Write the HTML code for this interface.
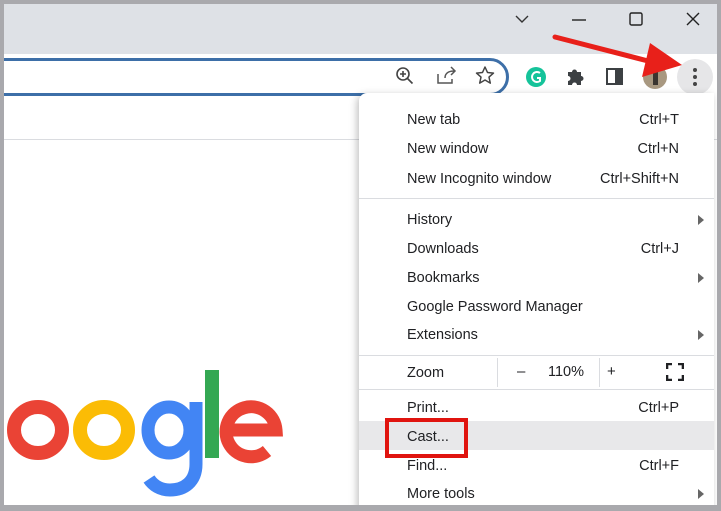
<!DOCTYPE html>
<html><head><meta charset="utf-8"><style>
*{margin:0;padding:0;box-sizing:border-box}
body{width:721px;height:511px;overflow:hidden;background:#a9a9ad;position:relative;font-family:"Liberation Sans",sans-serif;color:#202124}
#win{position:absolute;left:4px;top:4px;width:713px;height:501px;background:#fff;overflow:hidden}
#tabs{position:absolute;left:0;top:0;width:713px;height:50px;background:#dee1e6}
#omni{position:absolute;left:-20px;top:54px;width:525px;height:38px;border:3px solid #3d6fa8;border-radius:19px;background:#fff}
#hline{position:absolute;left:0;top:135px;width:713px;height:1px;background:#dadce0}
#menu{position:absolute;left:355px;top:89px;width:355px;height:420px;background:#fff;border-radius:8px 0 0 0;box-shadow:-2px 2px 8px rgba(0,0,0,.25)}
.it{position:absolute;left:48px;font-size:14.5px;line-height:18px}
.sc{position:absolute;right:35px;font-size:14.5px;line-height:18px;color:#202124}
.ar{position:absolute;right:10px;width:0;height:0;border-left:6px solid #666;border-top:5px solid transparent;border-bottom:5px solid transparent}
.sep{position:absolute;left:0;width:355px;height:1px;background:#dadce0}
</style></head><body>
<div id="win">
<div id="tabs"></div>
<div id="omni"></div>
<div id="hline"></div>
<svg width="713" height="501" style="position:absolute;left:0;top:0">
<path d="M512 12l6 6 6-6" stroke="#333" stroke-width="1.4" fill="none"/>
<path d="M568 16h14" stroke="#222" stroke-width="1.4"/>
<rect x="626" y="9" width="12" height="12" rx="1.5" stroke="#222" stroke-width="1.4" fill="none"/>
<path d="M683 9l12 12M695 9l-12 12" stroke="#222" stroke-width="1.4"/>
<circle cx="399" cy="70" r="6" stroke="#444" stroke-width="1.6" fill="none"/><path d="M403.5 74.5l5 5M396 70h6M399 67v6" stroke="#444" stroke-width="1.6"/>
<path d="M434 70v9h14v-4M441 74c0-5 4-7 9-7M447 63l4 4-4 4" stroke="#555" stroke-width="1.5" fill="none"/>
<path d="M481 63l2.5 5.5 6 .6-4.5 4 1.3 6-5.3-3.1-5.3 3.1 1.3-6-4.5-4 6-.6z" stroke="#444" stroke-width="1.5" fill="none" stroke-linejoin="round"/>
<circle cx="532" cy="73" r="10" fill="#15c39a"/><path d="M536 69a5 5 0 1 0 0 8v-3h-3" stroke="#fff" stroke-width="2" fill="none"/>
<path d="M564 68h4a2.5 2.5 0 0 1 5 0h4v4a2.5 2.5 0 0 1 0 5v4h-4a2.5 2.5 0 0 0-5 0h-4v-4a2.5 2.5 0 0 0 0-5z" fill="#3c4043"/>
<rect x="603" y="65" width="15" height="15" fill="none" stroke="#3c4043" stroke-width="2"/><rect x="611" y="65" width="7" height="15" fill="#3c4043"/>
<circle cx="651" cy="73" r="12" fill="#a89880"/><rect x="649" y="65" width="5" height="16" fill="#3a3530"/>
<circle cx="691" cy="73" r="18" fill="#e6e6e8"/>
<circle cx="691" cy="66" r="2" fill="#444"/><circle cx="691" cy="73" r="2" fill="#444"/><circle cx="691" cy="80" r="2" fill="#444"/>
<!-- google -->
<ellipse cx="34" cy="426" rx="24" ry="23" stroke="#ea4335" stroke-width="14" fill="none"/>
<ellipse cx="100" cy="426" rx="24" ry="23" stroke="#fbbc05" stroke-width="14" fill="none"/>
<ellipse cx="165" cy="426" rx="21" ry="23" stroke="#4285f4" stroke-width="13" fill="none"/>
<path d="M192 398v62c0 18-12 26-26 26-10 0-17-5-21-11" stroke="#4285f4" stroke-width="13" fill="none"/>
<rect x="201" y="366" width="14" height="88" fill="#34a853"/>
<path d="M223 426H272A25 25 0 1 0 263 447" stroke="#ea4335" stroke-width="13" fill="none"/>
</svg>
<div id="menu">
<div class="it" style="top:18px">New tab</div><div class="sc" style="top:18px">Ctrl+T</div>
<div class="it" style="top:47px">New window</div><div class="sc" style="top:47px">Ctrl+N</div>
<div class="it" style="top:77px">New Incognito window</div><div class="sc" style="top:77px">Ctrl+Shift+N</div>
<div class="sep" style="top:105px"></div>
<div class="it" style="top:118px">History</div><div class="ar" style="top:122px"></div>
<div class="it" style="top:147px">Downloads</div><div class="sc" style="top:147px">Ctrl+J</div>
<div class="it" style="top:176px">Bookmarks</div><div class="ar" style="top:180px"></div>
<div class="it" style="top:205px">Google Password Manager</div>
<div class="it" style="top:233px">Extensions</div><div class="ar" style="top:237px"></div>
<div class="sep" style="top:262px"></div>
<div class="it" style="top:271px">Zoom</div>
<div style="position:absolute;left:138px;top:265px;width:1px;height:29px;background:#dadce0"></div>
<div style="position:absolute;left:158px;top:270px;font-size:15px">–</div>
<div style="position:absolute;left:189px;top:271px;font-size:14.5px">110%</div>
<div style="position:absolute;left:248px;top:270px;font-size:15px">+</div>
<div style="position:absolute;left:240px;top:265px;width:1px;height:29px;background:#dadce0"></div>
<svg style="position:absolute;left:307px;top:270px" width="18" height="18"><path d="M1 6V1h5M12 1h5v5M17 12v5h-5M6 17H1v-5" stroke="#202124" stroke-width="2.6" fill="none"/></svg>
<div class="sep" style="top:296px"></div>
<div class="it" style="top:306px">Print...</div><div class="sc" style="top:306px">Ctrl+P</div>
<div style="position:absolute;left:0;top:328px;width:355px;height:29px;background:#e8e8ea"></div>
<div class="it" style="top:335px">Cast...</div>
<div style="position:absolute;left:26px;top:325px;width:83px;height:40px;border:4px solid #e0140f"></div>
<div class="it" style="top:364px">Find...</div><div class="sc" style="top:364px">Ctrl+F</div>
<div class="it" style="top:392px">More tools</div><div class="ar" style="top:396px"></div>
</div>
<svg width="713" height="501" style="position:absolute;left:0;top:0">
<path d="M551 33L648 58" stroke="#e8201a" stroke-width="5" stroke-linecap="round"/>
<path d="M678 61L638 73L646 39z" fill="#e8201a"/>
</svg>
</div>
</body></html>
